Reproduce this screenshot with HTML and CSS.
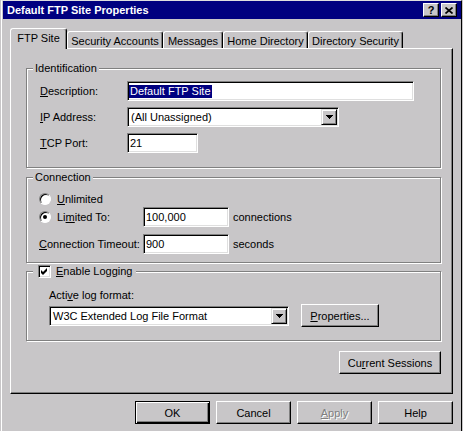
FILE: index.html
```html
<!DOCTYPE html>
<html>
<head>
    <title>Default FTP Site Properties</title>
    <link rel="stylesheet" href="styles.css">
</head>
<body>
    <div class="window">
        <div class="titlebar">
            <span class="title">Default FTP Site Properties</span>
            <span class="title-btn">?</span>
            <span class="title-btn">
                <svg width="8" height="7" viewBox="0 0 8 7">
                    <path d="M0.5 0.5 L7.5 6.5 M7.5 0.5 L0.5 6.5" stroke="#000" stroke-width="1.7"/>
                </svg>
            </span>
        </div>

        <div class="tabs">
            <div class="tab tab-active tab-ftp">FTP Site</div>
            <div class="tab tab-security">Security Accounts</div>
            <div class="tab tab-messages">Messages</div>
            <div class="tab tab-home">Home Directory</div>
            <div class="tab tab-dirsec">Directory Security</div>
        </div>

        <div class="panel">
            <!-- Identification -->
            <div class="group">
                <span class="group-title">Identification</span>
                <div class="id-grid">
                    <label><u>D</u>escription:</label>
                    <div class="field field-desc"><span class="selected">Default FTP Site</span></div>

                    <label><u>I</u>P Address:</label>
                    <div class="combo combo-ip">
                        <span class="combo-text">(All Unassigned)</span>
                        <span class="drop-btn"><svg width="7" height="4" viewBox="0 0 7 4"><path d="M0 0h7v1H0zM1 1h5v1H1zM2 2h3v1H2zM3 3h1v1H3z" fill="#000"/></svg></span>
                    </div>

                    <label><u>T</u>CP Port:</label>
                    <div class="field field-port">21</div>
                </div>
            </div>

            <!-- Connection -->
            <div class="group group-conn">
                <span class="group-title">Connection</span>
                <div class="conn-rows">
                    <div class="row row-radio">
                        <span class="radio"></span>
                        <span class="radio-text"><u>U</u>nlimited</span>
                    </div>
                    <div class="row">
                        <span class="row-label">
                            <span class="radio radio-on"><span class="dot"></span></span>
                            <span class="radio-text">Li<u>m</u>ited To:</span>
                        </span>
                        <div class="field field-conn">100,000</div>
                        <span class="unit">connections</span>
                    </div>
                    <div class="row row-timeout">
                        <span class="row-label"><span><u>C</u>onnection Timeout:</span></span>
                        <div class="field field-conn">900</div>
                        <span class="unit">seconds</span>
                    </div>
                </div>
            </div>

            <!-- Logging -->
            <div class="group group-log">
                <span class="group-title check-title">
                    <span class="checkbox">
                        <svg width="7" height="7" viewBox="0 0 7 7"><path d="M0 2L2 4L6 0V3L2 7L0 5Z" fill="#000"/></svg>
                    </span>
                    <span><u>E</u>nable Logging</span>
                </span>
                <div class="log-label">Acti<u>v</u>e log format:</div>
                <div class="log-row">
                    <div class="combo combo-log">
                        <span class="combo-text">W3C Extended Log File Format</span>
                        <span class="drop-btn"><svg width="7" height="4" viewBox="0 0 7 4"><path d="M0 0h7v1H0zM1 1h5v1H1zM2 2h3v1H2zM3 3h1v1H3z" fill="#000"/></svg></span>
                    </div>
                    <button class="btn btn-props"><span><u>P</u>roperties...</span></button>
                </div>
            </div>

            <button class="btn btn-sessions"><span>Cu<u>r</u>rent Sessions</span></button>
        </div>

        <div class="dialog-buttons">
            <button class="btn btn-default">OK</button>
            <button class="btn">Cancel</button>
            <button class="btn btn-disabled"><span><u>A</u>pply</span></button>
            <button class="btn">Help</button>
        </div>
    </div>
</body>
</html>
```

FILE: styles.css
```css
:root {
    /* classic 3D palette */
    --face: #c8c6c8;
    --light: #dfdfdf;
    --hilite: #ffffff;
    --shadow: #808080;
    --dark: #000000;
    --caption: #000080;
}

html, body {
    margin: 0;
    padding: 0;
}

body {
    background: var(--face);
    font-family: "Liberation Sans", Arial, sans-serif;
    font-size: 11px;
    color: #000;
    overflow: hidden;
}

u {
    text-decoration: underline;
    text-underline-offset: 1px;
}

.window {
    width: 458px;
    height: 430px;
    margin-left: 1px;
    padding-left: 1px;
    border-top: 1px solid var(--light);
    border-left: 1px solid var(--hilite);
    border-right: 1px solid var(--dark);
    background: var(--face);
}

/* title bar */
.titlebar {
    height: 18px;
    background: var(--caption);
    color: #fff;
    display: flex;
    align-items: center;
    gap: 2px;
    padding: 0 4px;
}

.title {
    flex: 1;
    font-weight: bold;
    font-size: 11px;
    white-space: nowrap;
}

.title-btn {
    width: 16px;
    height: 14px;
    box-sizing: border-box;
    background: var(--face);
    border: 1px solid;
    border-color: var(--hilite) var(--dark) var(--dark) var(--hilite);
    box-shadow: inset -1px -1px var(--shadow);
    color: #000;
    font-weight: bold;
    font-size: 11px;
    line-height: 12px;
    display: flex;
    align-items: center;
    justify-content: center;
}

/* tabs */
.tabs {
    display: flex;
    align-items: flex-end;
    padding: 9px 0 0 7px;
}

.tab {
    height: 17px;
    box-sizing: border-box;
    border: 1px solid var(--hilite);
    border-bottom: none;
    border-right-color: var(--dark);
    border-radius: 3px 3px 0 0;
    box-shadow: inset -1px 0 var(--shadow);
    display: flex;
    align-items: center;
    justify-content: center;
    white-space: nowrap;
    padding-top: 1px;
}

.tab-active {
    height: 21px;
    margin-bottom: -1px;
    position: relative;
    z-index: 1;
    background: var(--face);
    padding-bottom: 3px;
}

.tab-ftp { width: 57px; }
.tab-security { width: 96px; }
.tab-messages { width: 60px; }
.tab-home { width: 85px; }
.tab-dirsec { width: 95px; }

/* panel */
.panel {
    width: 443px;
    height: 346px;
    box-sizing: border-box;
    margin-left: 7px;
    border: 1px solid;
    border-color: var(--hilite) var(--dark) var(--dark) var(--hilite);
    box-shadow: inset -1px -1px var(--shadow);
    padding: 19px 11px 0 15px;
    display: flex;
    flex-direction: column;
}

.group {
    border: 1px solid var(--shadow);
    box-shadow: inset 1px 1px var(--hilite), 1px 1px var(--hilite);
    display: flex;
    flex-direction: column;
    align-items: flex-start;
}

.group-title {
    height: 13px;
    line-height: 13px;
    margin: -7px 0 0 6px;
    padding: 0 2px;
    background: var(--face);
}

.group-conn {
    margin-top: 9px;
}

.group-log {
    margin-top: 8px;
}

/* identification */
.id-grid {
    display: grid;
    grid-template-columns: 87px auto;
    row-gap: 6px;
    align-items: center;
    justify-items: start;
    padding: 6px 0 14px 13px;
}

.field, .combo {
    height: 20px;
    box-sizing: border-box;
    background: #fff;
    border: 1px solid;
    border-color: var(--shadow) var(--hilite) var(--hilite) var(--shadow);
    box-shadow: inset 1px 1px var(--dark), inset -1px -1px var(--light);
    display: flex;
    align-items: center;
    white-space: nowrap;
}

.field {
    padding: 0 2px;
}

.field-desc { width: 287px; }
.field-port { width: 71px; }
.field-conn { width: 86px; }

.selected {
    background: var(--caption);
    color: #fff;
    margin-left: -1px;
    padding: 0 1px;
    line-height: 13px;
}

.combo {
    padding: 1px;
}

.combo-ip { width: 212px; }
.combo-log { width: 240px; }

.combo-text {
    flex: 1;
    padding-left: 2px;
}

.drop-btn {
    width: 16px;
    height: 16px;
    box-sizing: border-box;
    background: var(--face);
    border: 1px solid;
    border-color: var(--light) var(--dark) var(--dark) var(--light);
    box-shadow: inset 1px 1px var(--hilite), inset -1px -1px var(--shadow);
    display: flex;
    align-items: center;
    justify-content: center;
}

/* connection */
.conn-rows {
    display: flex;
    flex-direction: column;
    padding: 6px 0 8px 12px;
}

.row {
    display: flex;
    align-items: center;
}

.row-radio {
    height: 17px;
    gap: 6px;
}

.row-timeout {
    margin-top: 7px;
}

.row-label {
    width: 104px;
    display: flex;
    align-items: center;
    gap: 6px;
    white-space: nowrap;
}

.radio {
    width: 12px;
    height: 12px;
    box-sizing: border-box;
    border-radius: 50%;
    background: #fff;
    border: 1px solid;
    border-color: var(--shadow) var(--hilite) var(--hilite) var(--shadow);
    box-shadow: inset 1px 1px var(--dark);
    display: flex;
    align-items: center;
    justify-content: center;
}

.dot {
    width: 4px;
    height: 4px;
    border-radius: 50%;
    background: #000;
}

.unit {
    margin-left: 4px;
}

/* logging */
.check-title {
    display: flex;
    align-items: center;
    gap: 5px;
    padding: 0 4px 0 5px;
}

.checkbox {
    width: 13px;
    height: 13px;
    box-sizing: border-box;
    background: #fff;
    border: 1px solid;
    border-color: var(--shadow) var(--hilite) var(--hilite) var(--shadow);
    box-shadow: inset 1px 1px var(--dark), inset -1px -1px var(--light);
    display: flex;
    align-items: center;
    justify-content: center;
}

.log-label {
    margin: 11px 0 0 22px;
    line-height: 13px;
}

.log-row {
    display: flex;
    align-items: center;
    margin: 2px 0 13px 22px;
    height: 23px;
}

/* buttons */
.btn {
    height: 23px;
    box-sizing: border-box;
    background: var(--face);
    border: 1px solid;
    border-color: var(--hilite) var(--dark) var(--dark) var(--hilite);
    box-shadow: inset -1px -1px var(--shadow);
    font: inherit;
    color: #000;
    padding: 0;
    display: flex;
    align-items: center;
    justify-content: center;
    white-space: nowrap;
}

.btn-props {
    width: 78px;
    margin-left: 12px;
}

.btn-sessions {
    width: 102px;
    margin-top: 10px;
    align-self: flex-end;
}

.btn-default {
    border-color: var(--dark);
    box-shadow: inset 1px 1px var(--hilite), inset -1px -1px var(--dark), inset -2px -2px var(--shadow);
}

.btn-disabled {
    color: var(--shadow);
    text-shadow: 1px 1px var(--hilite);
}

.dialog-buttons {
    display: flex;
    justify-content: flex-end;
    gap: 6px;
    margin-top: 7px;
    padding-right: 8px;
}

.dialog-buttons .btn {
    width: 75px;
}
```
